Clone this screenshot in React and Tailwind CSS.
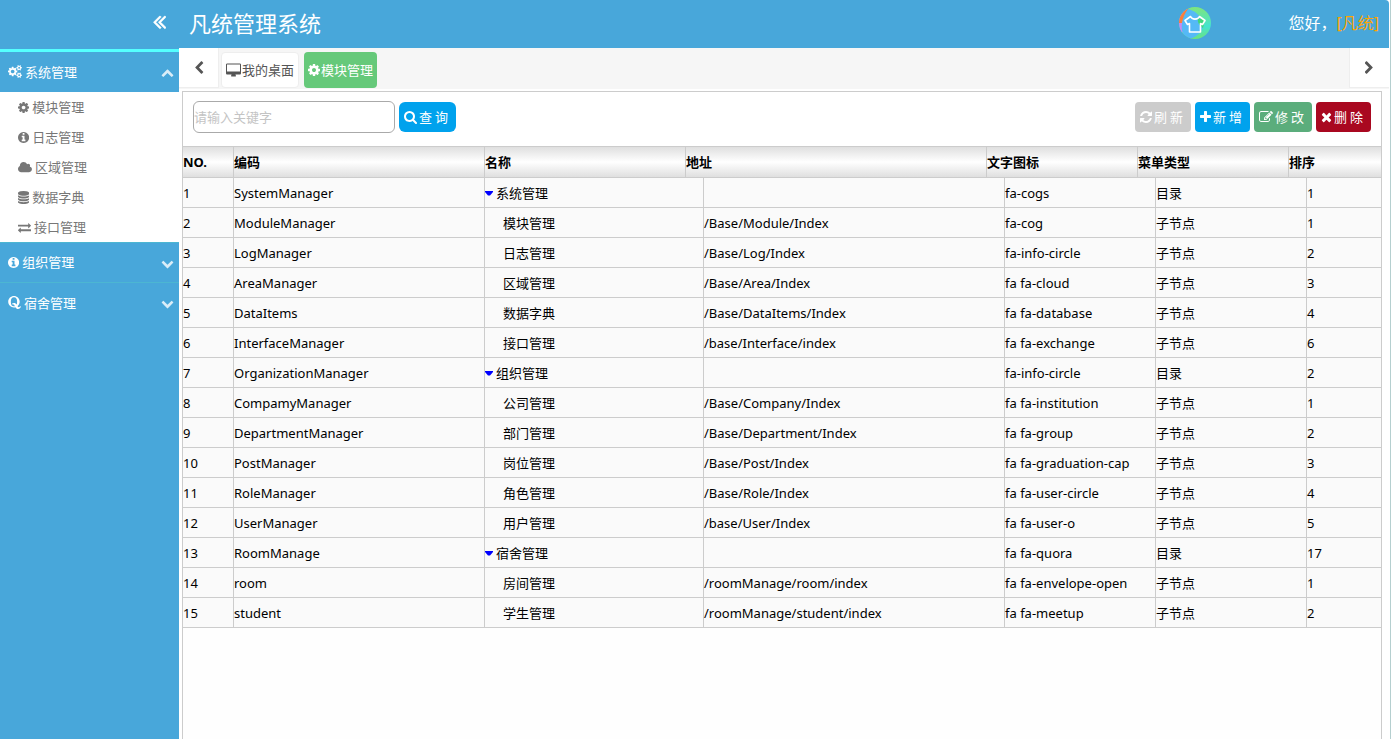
import { useState } from "react";
import { FaQuora } from "react-icons/fa";

const GLYPHS = {
  cog: ["128 0 1536 1792", "M1152 896q0-106-75-181t-181-75-181 75-75 181 75 181 181 75 181-75 75-181zm512-109v222q0 12-8 23t-20 13l-185 28q-19 54-39 91 35 50 107 138 10 12 10 25t-9 23q-27 37-99 108t-94 71q-12 0-26-9l-138-108q-44 23-91 38-16 136-29 186-7 28-36 28h-222q-14 0-24.5-8.5t-11.5-21.5l-28-184q-49-16-90-37l-141 107q-10 9-25 9-14 0-25-11-126-114-165-168-7-10-7-23 0-12 8-23 15-21 51-66.5t54-70.5q-27-50-41-99l-183-27q-13-2-21-12.5t-8-23.5v-222q0-12 8-23t19-13l186-28q14-46 39-92-40-57-107-138-10-12-10-24 0-10 9-23 26-36 98.5-107.5t94.5-71.5q13 0 26 10l138 107q44-23 91-38 16-136 29-186 7-28 36-28h222q14 0 24.5 8.5t11.5 21.5l28 184q49 16 90 37l142-107q9-9 24-9 13 0 25 10 129 119 165 170 7 8 7 22 0 12-8 23-15 21-51 66.5t-54 70.5q26 50 41 98l183 28q13 2 21 12.5t8 23.5z"],
  cogs: ["-64 0 1920 1792", "M832 896q0-106-75-181t-181-75-181 75-75 181 75 181 181 75 181-75 75-181zm768 512q0-52-38-90t-90-38-90 38-38 90q0 53 37.5 90.5t90.5 37.5 90.5-37.5 37.5-90.5zm0-1024q0-52-38-90t-90-38-90 38-38 90q0 53 37.5 90.5t90.5 37.5 90.5-37.5 37.5-90.5zm-384 421v185q0 10-7 19.5t-16 10.5l-155 24q-11 35-32 76 34 48 90 115 7 11 7 20 0 12-7 19-23 30-82.5 89.5t-78.5 59.5q-11 0-21-7l-115-90q-37 19-77 31-11 108-23 155-7 24-30 24h-186q-11 0-20-7.5t-10-17.5l-23-153q-34-10-75-31l-118 89q-7 7-20 7-11 0-21-8-144-133-144-160 0-9 7-19 10-14 41-53t47-61q-23-44-35-82l-152-24q-10-1-17-9.5t-7-19.5v-185q0-10 7-19.5t16-10.5l155-24q11-35 32-76-34-48-90-115-7-11-7-20 0-12 7-20 22-30 82-89t79-59q11 0 21 7l115 90q34-18 77-32 11-108 23-154 7-24 30-24h186q11 0 20 7.5t10 17.5l23 153q34 10 75 31l118-89q8-7 20-7 11 0 21 8 144 133 144 160 0 8-7 19-12 16-42 54t-45 60q23 48 34 82l152 23q10 2 17 10.5t7 19.5zm640 533v140q0 16-149 31-12 27-30 52 51 113 51 138 0 4-4 7-122 71-124 71-8 0-46-47t-52-68q-20 2-30 2t-30-2q-14 21-52 68t-46 47q-2 0-124-71-4-3-4-7 0-25 51-138-18-25-30-52-149-15-149-31v-140q0-16 149-31 13-29 30-52-51-113-51-138 0-4 4-7 4-2 35-20t59-34 30-16q8 0 46 46.5t52 67.5q20-2 30-2t30 2q51-71 92-112l6-2q4 0 124 70 4 3 4 7 0 25-51 138 17 23 30 52 149 15 149 31zm0-1024v140q0 16-149 31-12 27-30 52 51 113 51 138 0 4-4 7-122 71-124 71-8 0-46-47t-52-68q-20 2-30 2t-30-2q-14 21-52 68t-46 47q-2 0-124-71-4-3-4-7 0-25 51-138-18-25-30-52-149-15-149-31v-140q0-16 149-31 13-29 30-52-51-113-51-138 0-4 4-7 4-2 35-20t59-34 30-16q8 0 46 46.5t52 67.5q20-2 30-2t30 2q51-71 92-112l6-2q4 0 124 70 4 3 4 7 0 25-51 138 17 23 30 52 149 15 149 31z"],
  info: ["128 0 1536 1792", "M1152 1376v-160q0-14-9-23t-23-9h-96v-512q0-14-9-23t-23-9h-320q-14 0-23 9t-9 23v160q0 14 9 23t23 9h96v320h-96q-14 0-23 9t-9 23v160q0 14 9 23t23 9h448q14 0 23-9t9-23zm-128-896v-160q0-14-9-23t-23-9h-192q-14 0-23 9t-9 23v160q0 14 9 23t23 9h192q14 0 23-9t9-23zm640 416q0 209-103 385.5t-279.5 279.5-385.5 103-385.5-103-279.5-279.5-103-385.5 103-385.5 279.5-279.5 385.5-103 385.5 103 279.5 279.5 103 385.5z"],
  cloud: ["64 0 1920 1792", "M1984 1152q0 159-112.5 271.5t-271.5 112.5h-1088q-185 0-316.5-131.5t-131.5-316.5q0-132 71-241.5t187-163.5q-2-28-2-43 0-212 150-362t362-150q158 0 286.5 88t187.5 230q70-62 166-62 106 0 181 75t75 181q0 75-41 138 129 30 213 134.5t84 239.5z"],
  database: ["128 0 1536 1792", "M896 768q237 0 443-43t325-127v170q0 69-103 128t-280 93.5-385 34.5-385-34.5-280-93.5-103-128v-170q119 84 325 127t443 43zm0 768q237 0 443-43t325-127v170q0 69-103 128t-280 93.5-385 34.5-385-34.5-280-93.5-103-128v-170q119 84 325 127t443 43zm0-384q237 0 443-43t325-127v170q0 69-103 128t-280 93.5-385 34.5-385-34.5-280-93.5-103-128v-170q119 84 325 127t443 43zm0-1152q208 0 385 34.5t280 93.5 103 128v128q0 69-103 128t-280 93.5-385 34.5-385-34.5-280-93.5-103-128v-128q0-69 103-128t280-93.5 385-34.5z"],
  exchange: ["0 0 1792 1792", "M1792 1184v192q0 13-9.5 22.5t-22.5 9.5h-1376v192q0 13-9.5 22.5t-22.5 9.5q-12 0-24-10l-319-320q-9-9-9-22 0-14 9-23l320-320q9-9 23-9 13 0 22.5 9.5t9.5 22.5v192h1376q13 0 22.5 9.5t9.5 22.5zm0-544q0 14-9 23l-320 320q-9 9-23 9-13 0-22.5-9.5t-9.5-22.5v-192h-1376q-13 0-22.5-9.5t-9.5-22.5v-192q0-13 9.5-22.5t22.5-9.5h1376v-192q0-14 9-23t23-9q12 0 24 10l319 319q9 9 9 23z"],
  search: ["64 0 1664 1792", "M1216 832q0-185-131.5-316.5t-316.5-131.5-316.5 131.5-131.5 316.5 131.5 316.5 316.5 131.5 316.5-131.5 131.5-316.5zm512 832q0 52-38 90t-90 38q-54 0-90-38l-343-342q-179 124-399 124-143 0-273.5-55.5t-225-150-150-225-55.5-273.5 55.5-273.5 150-225 225-150 273.5-55.5 273.5 55.5 225 150 150 225 55.5 273.5q0 220-124 399l343 343q37 37 37 90z"],
  times: ["192 0 1408 1792", "M1490 1322q0 40-28 68l-136 136q-28 28-68 28t-68-28l-294-294-294 294q-28 28-68 28t-68-28l-136-136q-28-28-28-68t28-68l294-294-294-294q-28-28-28-68t28-68l136-136q28-28 68-28t68 28l294 294 294-294q28-28 68-28t68 28l136 136q28 28 28 68t-28 68l-294 294 294 294q28 28 28 68z"],
  plus: ["192 0 1408 1792", "M1600 736v192q0 40-28 68t-68 28h-416v416q0 40-28 68t-68 28h-192q-40 0-68-28t-28-68v-416h-416q-40 0-68-28t-28-68v-192q0-40 28-68t68-28h416v-416q0-40 28-68t68-28h192q40 0 68 28t28 68v416h416q40 0 68 28t28 68z"],
  refresh: ["128 0 1536 1792", "M1639 1056q0 5-1 7-64 268-268 434.5t-478 166.5q-146 0-282.5-55t-243.5-157l-129 129q-19 19-45 19t-45-19-19-45v-448q0-26 19-45t45-19h448q26 0 45 19t19 45-19 45l-137 137q71 66 161 102t187 36q134 0 250-65t186-179q11-17 53-117 8-23 30-23h192q13 0 22.5 9.5t9.5 22.5zm25-800v448q0 26-19 45t-45 19h-448q-26 0-45-19t-19-45 19-45l138-138q-148-137-349-137-134 0-250 65t-186 179q-11 17-53 117-8 23-30 23h-199q-13 0-22.5-9.5t-9.5-22.5v-7q65-268 270-434.5t480-166.5q146 0 284 55.5t245 156.5l130-129q19-19 45-19t45 19 19 45z"],
  edit: ["0 0 1792 1792", "M888 1184l116-116-152-152-116 116v56h96v96h56zm440-720q-16-16-33 1l-350 350q-17 17-1 33t33-1l350-350q17-17 1-33zm80 594v190q0 119-84.5 203.5t-203.5 84.5h-832q-119 0-203.5-84.5t-84.5-203.5v-832q0-119 84.5-203.5t203.5-84.5h832q63 0 117 25 15 7 18 23 3 17-9 29l-49 49q-14 14-32 8-23-6-45-6h-832q-66 0-113 47t-47 113v832q0 66 47 113t113 47h832q66 0 113-47t47-113v-126q0-13 9-22l64-64q15-15 35-7t20 29zm-96-738l288 288-672 672h-288v-288zm444 132l-92 92-288-288 92-92q28-28 68-28t68 28l152 152q28 28 28 68t-28 68z"],
  desktop: ["-64 -64 1920 1792", "M1728 992v-832q0-13-9.5-22.5t-22.5-9.5h-1600q-13 0-22.5 9.5t-9.5 22.5v832q0 13 9.5 22.5t22.5 9.5h1600q13 0 22.5-9.5t9.5-22.5zm128-832v1088q0 66-47 113t-113 47h-544q0 37 16 77.5t32 71 16 43.5q0 26-19 45t-45 19h-512q-26 0-45-19t-19-45q0-14 16-44t32-70 16-78h-544q-66 0-113-47t-47-113v-1088q0-66 47-113t113-47h1600q66 0 113 47t47 113z"],
  left: ["256 0 1280 1792", "M1427 301l-531 531 531 531q19 19 19 45t-19 45l-166 166q-19 19-45 19t-45-19l-742-742q-19-19-19-45t19-45l742-742q19-19 45-19t45 19l166 166q19 19 19 45t-19 45z"],
  right: ["384 0 1280 1792", "M1363 877l-742 742q-19 19-45 19t-45-19l-166-166q-19-19-19-45t19-45l531-531-531-531q-19-19-19-45t19-45l166-166q19-19 45-19t45 19l742 742q19 19 19 45t-19 45z"],
  up: ["0 0 1792 1792", "M1683 1331l-166 165q-19 19-45 19t-45-19l-531-531-531 531q-19 19-45 19t-45-19l-166-165q-19-19-19-45.5t19-45.5l742-741q19-19 45-19t45 19l742 741q19 19 19 45.5t-19 45.5z"],
  down: ["0 0 1792 1792", "M1683 808l-742 741q-19 19-45 19t-45-19l-742-741q-19-19-19-45.5t19-45.5l166-165q19-19 45-19t45 19l531 531 531-531q19-19 45-19t45 19l166 165q19 19 19 45.5t-19 45.5z"],
  collapse: ["384 0 1024 1792", "M1011 1376q0 13-10 23l-50 50q-10 10-23 10t-23-10l-466-466q-10-10-10-23t10-23l466-466q10-10 23-10t23 10l50 50q10 10 10 23t-10 23l-393 393 393 393q10 10 10 23zm384 0q0 13-10 23l-50 50q-10 10-23 10t-23-10l-466-466q-10-10-10-23t10-23l466-466q10-10 23-10t23 10l50 50q10 10 10 23t-10 23l-393 393 393 393q10 10 10 23z"],
};

function Icon({ name, className = "h-[13px]" }) {
  const [viewBox, d] = GLYPHS[name];
  return (
    <svg viewBox={viewBox} fill="currentColor" aria-hidden="true" className={`w-auto shrink-0 ${className}`}>
      <path d={d} />
    </svg>
  );
}

function ShirtBadge() {
  return (
    <svg viewBox="0 0 32 32" className="size-8" aria-hidden="true">
      <defs>
        <linearGradient id="badge-green" x1="0" y1="0" x2="0" y2="1">
          <stop offset="0" stopColor="#7fe67c" />
          <stop offset="0.6" stopColor="#45e3d0" />
          <stop offset="1" stopColor="#6be37f" />
        </linearGradient>
        <clipPath id="badge-clip">
          <circle cx="16" cy="16" r="16" />
        </clipPath>
      </defs>
      <g clipPath="url(#badge-clip)">
        <rect width="32" height="32" fill="url(#badge-green)" />
        <path d="M0 0h9l-4 13-1 12-4 2z" fill="#c78af0" />
        <path d="M0 0h10L3 16H0z" fill="#fb7f3a" />
        <path d="M9 2c8 2 15 9 15 16 0 6-5 11-13 14C4 29 2 25 3 16 4 10 6 6 9 2z" fill="#55b9f6" />
        <path d="M19 11l7 2-2 8c-3-2-6-5-5-10z" fill="#3fd67c" />
      </g>
      <path
        d="M11.5 9.5C13 13 19 13 20.5 9.5L26 13.5 23.5 17.5 21.5 16.5V25H10.5V16.5L8.5 17.5 6 13.5z"
        fill="none"
        stroke="#fff"
        strokeWidth="1.6"
        strokeLinejoin="round"
      />
    </svg>
  );
}

const SYSTEM_LINKS = [
  ["cog", "模块管理"],
  ["info", "日志管理"],
  ["cloud", "区域管理"],
  ["database", "数据字典"],
  ["exchange", "接口管理"],
];

const ROWS = [
  ["SystemManager", "系统管理", "", "fa-cogs", "目录", 1],
  ["ModuleManager", "模块管理", "/Base/Module/Index", "fa-cog", "子节点", 1],
  ["LogManager", "日志管理", "/Base/Log/Index", "fa-info-circle", "子节点", 2],
  ["AreaManager", "区域管理", "/Base/Area/Index", "fa fa-cloud", "子节点", 3],
  ["DataItems", "数据字典", "/Base/DataItems/Index", "fa fa-database", "子节点", 4],
  ["InterfaceManager", "接口管理", "/base/Interface/index", "fa fa-exchange", "子节点", 6],
  ["OrganizationManager", "组织管理", "", "fa-info-circle", "目录", 2],
  ["CompamyManager", "公司管理", "/Base/Company/Index", "fa fa-institution", "子节点", 1],
  ["DepartmentManager", "部门管理", "/Base/Department/Index", "fa fa-group", "子节点", 2],
  ["PostManager", "岗位管理", "/Base/Post/Index", "fa fa-graduation-cap", "子节点", 3],
  ["RoleManager", "角色管理", "/Base/Role/Index", "fa fa-user-circle", "子节点", 4],
  ["UserManager", "用户管理", "/base/User/Index", "fa fa-user-o", "子节点", 5],
  ["RoomManage", "宿舍管理", "", "fa fa-quora", "目录", 17],
  ["room", "房间管理", "/roomManage/room/index", "fa fa-envelope-open", "子节点", 1],
  ["student", "学生管理", "/roomManage/student/index", "fa fa-meetup", "子节点", 2],
];

function MenuHeading({ icon, label, open, onClick }) {
  return (
    <button
      type="button"
      aria-expanded={open}
      onClick={onClick}
      className="flex h-10 w-full items-center gap-[3px] pr-[5px] pb-px pl-2 text-white"
    >
      {icon}
      <span>{label}</span>
      <Icon name={open ? "up" : "down"} className="mt-[2px] ml-auto h-[13px] text-white/80" />
    </button>
  );
}

function ActionButton({ icon, label, className }) {
  return (
    <button
      type="button"
      className={`flex h-[30px] items-center gap-[2px] px-[5px] tracking-[3px] text-white ${className}`}
    >
      <Icon name={icon} className="h-[14px]" />
      <span>{label}</span>
    </button>
  );
}

function Sidebar() {
  const [open, setOpen] = useState(true);
  return (
    <aside className="flex w-[179px] shrink-0 flex-col bg-[#48a7da]">
      <div className="flex h-[52px] items-center justify-end border-b-[3px] border-[#55ffff] pr-[13px] pb-[7px]">
        <button type="button" aria-label="收起菜单" className="text-white">
          <Icon name="collapse" className="h-[23px] stroke-white stroke-[50]" />
        </button>
      </div>
      <nav className="divide-y divide-[#4cb6d2]">
        <div>
          <MenuHeading icon={<Icon name="cogs" />} label="系统管理" open={open} onClick={() => setOpen(!open)} />
          {open && (
            <ul className="bg-white text-[#777]">
              {SYSTEM_LINKS.map(([icon, label]) => (
                <li key={label}>
                  <a href="#" className="flex h-[30px] items-center gap-[3px] pl-[18px]">
                    <Icon name={icon} />
                    {label}
                  </a>
                </li>
              ))}
            </ul>
          )}
        </div>
        <MenuHeading icon={<Icon name="info" />} label="组织管理" open={false} />
        <MenuHeading
          icon={<FaQuora viewBox="0 32 448 448" className="size-[13px] shrink-0" aria-hidden="true" />}
          label="宿舍管理"
          open={false}
        />
      </nav>
    </aside>
  );
}

function Tabs() {
  return (
    <div className="flex h-[41px] bg-[#f6f6f6]">
      <button type="button" aria-label="向左" className="flex h-10 w-10 items-center justify-center border-r border-b border-[#eee] bg-white text-[#555]">
        <Icon name="left" className="h-[14px]" />
      </button>
      <div className="flex grow items-start gap-[5px] pt-[4px] pl-[2px]">
        <button type="button" className="flex h-9 items-center gap-px rounded border border-[#eee] bg-white px-1 text-[#555]">
          <Icon name="desktop" className="h-[14px]" />
          我的桌面
        </button>
        <button type="button" className="flex h-9 items-center gap-px rounded bg-[#66c97a] px-1 text-white">
          <Icon name="cog" className="h-[14px]" />
          模块管理
        </button>
      </div>
      <button type="button" aria-label="向右" className="flex h-10 w-10 items-center justify-center border-b border-l border-[#eee] bg-white text-[#555]">
        <Icon name="right" className="h-[14px]" />
      </button>
    </div>
  );
}

function ModuleTable() {
  const headCell = "border-r border-[#ccc] p-0 text-left font-bold last:border-r-0";
  const cell = "border-r border-[#ccc] p-0 last:border-r-0";
  return (
    <div className="text-black">
      <table className="w-full table-fixed border-separate border-spacing-0">
        <colgroup>
          <col className="w-[51px]" />
          <col className="w-[251px]" />
          <col className="w-[201px]" />
          <col className="w-[301px]" />
          <col className="w-[151px]" />
          <col className="w-[151px]" />
          <col />
        </colgroup>
        <thead>
          <tr className="h-8 bg-linear-to-b from-[#ddd] via-white to-[#ddd]">
            {["NO.", "编码", "名称", "地址", "文字图标", "菜单类型", "排序"].map((title) => (
              <th key={title} scope="col" className={`border-y ${headCell}`}>{title}</th>
            ))}
          </tr>
        </thead>
      </table>
      <table className="w-full table-fixed border-separate border-spacing-0 bg-[#fafafa]">
        <colgroup>
          <col className="w-[51px]" />
          <col className="w-[251px]" />
          <col className="w-[219px]" />
          <col className="w-[301px]" />
          <col className="w-[151px]" />
          <col className="w-[151px]" />
          <col />
        </colgroup>
        <tbody>
          {ROWS.map(([code, name, url, icon, type, order], i) => (
            <tr key={code} className="h-[30px]">
              <td className={`border-b ${cell}`}>{i + 1}</td>
              <td className={`border-b ${cell}`}>{code}</td>
              <td className={`border-b ${cell}`}>
                {type === "目录" ? (
                  <span className="flex items-center gap-[3px]">
                    <svg viewBox="0 0 8 6" className="h-[6px] w-2" aria-hidden="true">
                      <path d="M0 1h8v1L5 5.5H3L0 2z" fill="#0000ff" />
                    </svg>
                    {name}
                  </span>
                ) : (
                  <span className="pl-[18px]">{name}</span>
                )}
              </td>
              <td className={`border-b ${cell}`}>{url}</td>
              <td className={`border-b ${cell}`}>{icon}</td>
              <td className={`border-b ${cell}`}>{type}</td>
              <td className={`border-b ${cell}`}>{order}</td>
            </tr>
          ))}
        </tbody>
      </table>
    </div>
  );
}

export default function App() {
  return (
    <div className="flex min-h-screen border-r border-[#b5cfcf] bg-white font-['Noto_Sans','Noto_Sans_CJK_SC',sans-serif] text-[13px] leading-5">
      <Sidebar />
      <div className="flex min-w-0 grow flex-col pr-px">
        <header className="flex h-12 items-center rounded-tr-sm bg-[#48a7da] px-[10px] pb-[2px] text-white">
          <h1 className="grow text-[22px]">凡统管理系统</h1>
          <button type="button" aria-label="换肤" className="mr-[77px]">
            <ShirtBadge />
          </button>
          <p className="text-base">
            您好，<a href="#" className="text-[#ffa500]">[凡统]</a>
          </p>
        </header>
        <Tabs />
        <main className="mt-[2px] mr-[7px] ml-[3px] flex grow flex-col border-x border-t border-[#ccc] bg-[#fefefe]">
          <div className="flex h-[54px] items-center gap-1 bg-white px-[10px] pb-1">
            <input
              type="text"
              aria-label="关键字"
              placeholder="请输入关键字"
              className="h-8 w-[202px] rounded-md border border-[#aaa] bg-white placeholder:text-[#c4c4c4]"
            />
            <ActionButton icon="search" label="查询" className="mr-auto rounded-md bg-[#00a2ed]" />
            <ActionButton icon="refresh" label="刷新" className="rounded-sm bg-[#ccc]" />
            <ActionButton icon="plus" label="新增" className="rounded-sm bg-[#00a2ed]" />
            <ActionButton icon="edit" label="修改" className="rounded-sm bg-[#5bad7c]" />
            <ActionButton icon="times" label="删除" className="rounded-sm bg-[#a90820]" />
          </div>
          <ModuleTable />
        </main>
      </div>
    </div>
  );
}
